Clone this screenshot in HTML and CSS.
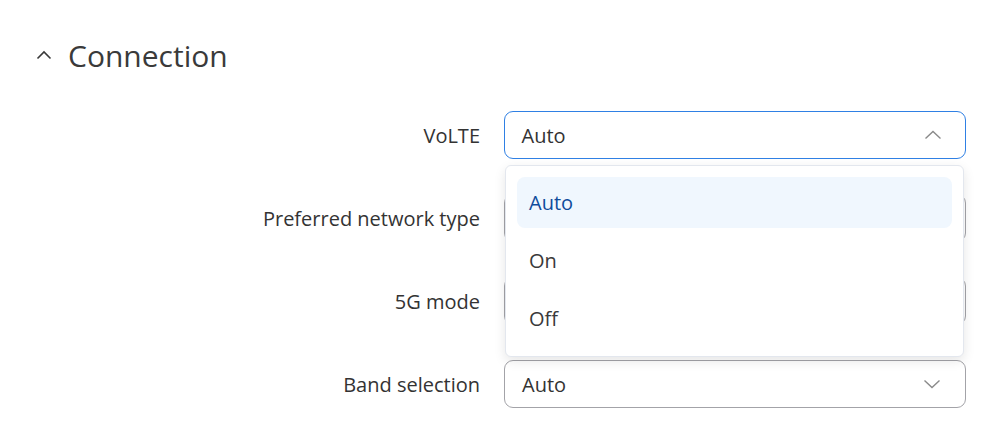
FILE: index.html
```html
<!DOCTYPE html>
<html lang="en">
	<head>
		<meta charset="UTF-8" />
		<meta name="viewport" content="width=device-width, initial-scale=1.0" />
		<title>Connection</title>
		<link rel="stylesheet" href="styles.css">
	</head>
	<body>
		<div class="section">
			<h1 class="section-title">
				<svg class="collapse-icon" width="16" height="10" viewBox="0 0 16 10">
					<path d="M1.5 8.5 L8 2 L14.5 8.5" fill="none" stroke="#3a3a3a" stroke-width="1.6" />
				</svg>
				Connection
			</h1>

			<div class="form">
				<div class="form-row">
					<label class="form-label">VoLTE</label>
					<div class="select-wrap">
						<div class="select is-open">
							<span>Auto</span>
							<svg class="caret" width="18" height="10" viewBox="0 0 18 10">
								<path d="M1.5 8.5 L9 1.5 L16.5 8.5" fill="none" stroke="#8a8a8a" stroke-width="1.4" />
							</svg>
						</div>
						<ul class="dropdown">
							<li class="option is-selected">Auto</li>
							<li class="option">On</li>
							<li class="option">Off</li>
						</ul>
					</div>
				</div>

				<div class="form-row">
					<label class="form-label">Preferred network type</label>
					<div class="select-wrap">
						<div class="select"><span class="is-covered">Auto</span></div>
					</div>
				</div>

				<div class="form-row">
					<label class="form-label">5G mode</label>
					<div class="select-wrap">
						<div class="select"><span class="is-covered">Auto</span></div>
					</div>
				</div>

				<div class="form-row">
					<label class="form-label">Band selection</label>
					<div class="select-wrap">
						<div class="select">
							<span>Auto</span>
							<svg class="caret" width="18" height="10" viewBox="0 0 18 10">
								<path d="M1.5 1.5 L9 8.5 L16.5 1.5" fill="none" stroke="#8a8a8a" stroke-width="1.4" />
							</svg>
						</div>
					</div>
				</div>
			</div>
		</div>
	</body>
</html>
```

FILE: styles.css
```css
* {
	margin: 0;
	padding: 0;
	box-sizing: border-box;
}

body {
	font-family: "Open Sans", "Liberation Sans", sans-serif;
	color: #333;
	background: #fff;
}

.section {
	padding: 36px 33px 0 36px;
}

.section-title {
	display: flex;
	align-items: center;
	gap: 16px;
	font-size: 30px;
	font-weight: 500;
	line-height: 40px;
	color: #3a3a3a;
}

.collapse-icon {
	margin-top: -2px;
}

.form {
	display: flex;
	flex-direction: column;
	gap: 35px;
	margin-top: 35px;
}

.form-row {
	display: grid;
	grid-template-columns: 444px 462px;
	column-gap: 24px;
	align-items: center;
}

.form-label {
	text-align: right;
	font-size: 20px;
	color: #333;
}

.select-wrap {
	position: relative;
}

.select {
	height: 48px;
	border: 1px solid #a3a3a8;
	border-radius: 9px;
	display: flex;
	align-items: center;
	justify-content: space-between;
	padding: 0 24px 0 17px;
	font-size: 20px;
	color: #333;
	background: #fff;
}

.select.is-open {
	border: 1.5px solid #2f80e4;
	padding-left: 16.5px;
	padding-right: 23.5px;
}

/* hidden under the open dropdown */
.is-covered {
	visibility: hidden;
}

.caret {
	display: block;
}

.dropdown {
	position: absolute;
	top: calc(100% + 6px);
	left: 1px;
	right: 2px;
	z-index: 2;
	list-style: none;
	background: #fff;
	border: 1px solid #e3e7ee;
	border-radius: 6px;
	box-shadow: 0 4px 12px rgba(0, 0, 0, 0.1);
	padding: 11px 11px 12px;
	display: flex;
	flex-direction: column;
	gap: 7px;
}

.option {
	height: 51px;
	display: flex;
	align-items: center;
	padding: 0 12px;
	border-radius: 8px;
	font-size: 20px;
	color: #3a3a3a;
}

.option.is-selected {
	background: #f0f7fe;
	color: #0f4c9c;
}
```
